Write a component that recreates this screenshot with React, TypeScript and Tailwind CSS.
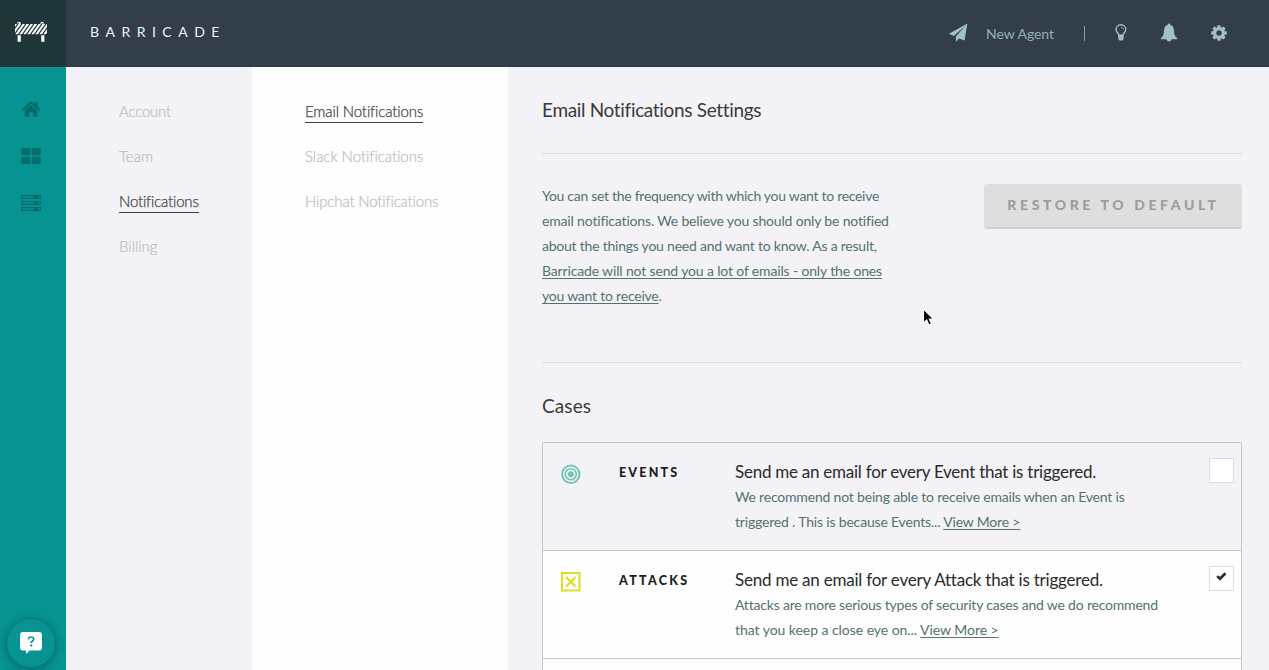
import type { ReactNode } from "react";

const STRIPES = [0, 4, 8, 12, 16, 20, 24, 28, 32, 36, 40];

function BarricadeLogo() {
  return (
    <svg width="34" height="22" viewBox="0 0 34 22" className="block">
      <defs>
        <clipPath id="board">
          <path d="M1 3h2.5V1.6L5 .7l1.5.9V3h20V1.6L28 .7l1.5.9V3H33v10.2H1z" />
        </clipPath>
      </defs>
      <g clipPath="url(#board)" stroke="#fff" strokeWidth="2.100">
        {STRIPES.map((x) => (
          <path key={x} d={`M${x - 6} 14 L${x + 4} 0`} />
        ))}
      </g>
      <path d="M3 2.2 5 .8l2 1.4zM26.5 2.2l2-1.4 2 1.4z" fill="#fff" />
      <path d="M3.6 14.3h3.2v6.4H3.6zM27.2 14.3h3.2v6.4h-3.2z" fill="#fff" />
    </svg>
  );
}

function PlaneIcon() {
  return (
    <svg width="20" height="20" viewBox="0 0 20 20" fill="#a3bfcc" className="block">
      <path d="M18.400.400 0 10.700l4.700 2.300L16.200 3.100 6.900 13.500v5.200l3.200-3.300 5.400 2z" />
    </svg>
  );
}

function BulbIcon() {
  return (
    <svg width="12" height="18" viewBox="0 0 12 18" className="block">
      <path
        d="M3.9 11.3C3.6 9 1 8.2 1 5.4a4.9 4.6 0 0 1 9.8 0c0 2.800-2.600 3.600-2.900 5.900z"
        fill="none"
        stroke="#a3bfcc"
        strokeWidth="1.4"
      />
      <path d="M3.200 11h5.400v3.200c0 1.600-1 2.400-2.700 2.400s-2.700-.8-2.700-2.400z" fill="#a3bfcc" />
      <path d="M6 3.300c1.300 0 2.100.8 2.200 2" fill="none" stroke="#a3bfcc" strokeWidth=".9" />
    </svg>
  );
}

function BellIcon() {
  return (
    <svg width="18" height="20" viewBox="0 0 18 20" fill="#a3bfcc" className="block">
      <path d="M9 .5c.9 0 1.400.6 1.400 1.500C13 2.800 13.900 5 14 7.600c.1 4 .7 6 3.200 7.700v.9H.8v-.9C3.300 13.600 3.900 11.600 4 7.600 4.100 5 5 2.800 7.600 2 7.600 1.100 8.100.5 9 .5z" />
      <path d="M6.300 16h5.400c-.3 1.600-1.200 2.500-2.700 2.500S6.600 17.600 6.300 16z" />
    </svg>
  );
}

function GearIcon() {
  return (
    <svg width="16" height="16" viewBox="-8 -8 16 16" className="block">
      <circle r="4.300" fill="none" stroke="#a3bfcc" strokeWidth="3.200" />
      {[0, 45, 90, 135, 180, 225, 270, 315].map((a) => (
        <path key={a} d="M-1.900-5.200-1.500-7.800h3l.4 2.600z" fill="#a3bfcc" transform={`rotate(${a})`} />
      ))}
    </svg>
  );
}

function HomeIcon() {
  return (
    <svg width="20" height="17" viewBox="0 0 20 17" className="block">
      <path d="M13.700 1.200h2.800v5.500l-2.800-2.600z" fill="#046c6b" />
      <path d="M1.100 9.200 10 1.600l8.900 7.600" fill="none" stroke="#046c6b" strokeWidth="1.900" />
      <path d="M10 3.900l6.300 5.400v6.500h-4.500v-4.500H8.300v4.500H3.700V9.300z" fill="#046c6b" />
    </svg>
  );
}

function GridIcon() {
  return (
    <svg width="20" height="16" viewBox="0 0 20 16" fill="#046c6b" className="block">
      <rect x="0.300" width="9" height="7.200" rx="1.300" />
      <rect x="10.700" width="9" height="7.200" rx="1.300" />
      <rect x="0.300" y="8.700" width="9" height="7.200" rx="1.300" />
      <rect x="10.700" y="8.700" width="9" height="7.200" rx="1.300" />
    </svg>
  );
}

function ServerIcon() {
  return (
    <svg width="20" height="16" viewBox="0 0 20 16" className="block">
      {[0, 6, 12].map((y) => (
        <g key={y}>
          <rect x=".6" y={y + 0.6} width="18.800" height="2.800" fill="none" stroke="#046c6b" strokeWidth="1.300" />
          <path d={`M13 ${y}h4v4h-4z`} fill="#046c6b" />
        </g>
      ))}
    </svg>
  );
}

function ChatIcon() {
  return (
    <svg width="22" height="22" viewBox="0 0 22 22" className="block">
      <path
        d="M3 0h16a3 3 0 0 1 3 3v12.500a3 3 0 0 1-3 3H9.500L6.500 22l-.7-3.500H3a3 3 0 0 1-3-3V3a3 3 0 0 1 3-3z"
        fill="#fff"
      />
      <path
        d="M8.400 7.200c.1-1.500 1.100-2.200 2.600-2.200 1.600 0 2.700.8 2.700 2.100 0 1.900-2.500 1.900-2.500 4"
        fill="none"
        stroke="#069392"
        strokeWidth="1.700"
      />
      <rect x="10.200" y="12.500" width="2" height="2" fill="#069392" />
    </svg>
  );
}

function EventIcon() {
  return (
    <svg width="20" height="20" viewBox="-10 -10 20 20" fill="none" stroke="#74c5b7" className="block">
      <circle cx="-.2" cy=".3" r="8.700" strokeWidth="2" />
      <circle cx="-.2" cy=".3" r="5.500" strokeWidth="1.600" />
      <circle cx="-.2" cy=".3" r="3" fill="#74c5b7" stroke="none" />
    </svg>
  );
}

function AttackIcon() {
  return (
    <svg width="20" height="20" viewBox="0 0 20 20" fill="none" stroke="#dcdf25" className="block">
      <rect x="1" y="1" width="17.500" height="17.500" strokeWidth="2" />
      <path d="M5 5l9.500 9.500M14.500 5 5 14.500" strokeWidth="2.200" />
    </svg>
  );
}

function NavItem({ active, className, children }: { active?: boolean; className: string; children: ReactNode }) {
  return (
    <div className="flex h-[45px] items-start whitespace-nowrap pt-[12px] text-[15px] leading-[20px]">
      <span
        className={
          (active
            ? "h-[22px] border-b border-[#3f3f3f] font-light text-[#444] [-webkit-text-stroke:0.25px_#444] "
            : "h-[22px] font-light text-[#bababc] [-webkit-text-stroke:0.2px_#c0c0c2] ") + className
        }
      >
        {children}
      </span>
    </div>
  );
}

function CaseRow({
  icon,
  label,
  title,
  line1,
  line2,
  checked,
  className,
}: {
  icon: ReactNode;
  label: ReactNode;
  title: ReactNode;
  line1: ReactNode;
  line2: ReactNode;
  checked: boolean;
  className: string;
}) {
  return (
    <div className={"flex h-[108px] items-start border-b border-[#c8c8ca] " + className}>
      <div className="w-[76px] shrink-0 pl-[18px] pt-[21px]">{icon}</div>
      <div className="w-[116px] shrink-0 pt-[20px] text-[12.500px] font-black leading-[20px] text-[#1c1c1c]">
        {label}
      </div>
      <div className="min-w-0 flex-1 whitespace-nowrap text-[14px] leading-[25px] text-[#557170]">
        <div className="mt-[16px] text-[17px] leading-[25px] text-[#2a2a2a]">{title}</div>
        <div>{line1}</div>
        <div>{line2}</div>
      </div>
      <div className="mr-[7px] mt-[15px] flex h-[25px] w-[25px] shrink-0 justify-center border border-[#dcdcde] bg-white pt-[5px]">
        {checked && (
          <svg width="11" height="9" viewBox="0 0 11 9" className="block">
            <path d="M1.200 4.100l2.800 2.700 5.500-5.500" fill="none" stroke="#2e2e2e" strokeWidth="2.700" />
          </svg>
        )}
      </div>
    </div>
  );
}

const link = "underline decoration-1 underline-offset-[2px]";

export default function App() {
  return (
    <div className="relative flex h-[670px] w-[1269px] flex-col overflow-hidden bg-[#f3f2f7] font-['Lato',sans-serif]">
      <header className="flex h-[67px] shrink-0 bg-[#323f4b]">
        <div className="flex h-[67px] w-[66px] shrink-0 bg-[#213639] pl-[14px] pt-[21px]">
          <BarricadeLogo />
        </div>
        <div className="flex flex-1 items-center border-b border-[#2b3742] pl-[24px] pr-[42px]">
          <div className="mt-[-4px] text-[14px] tracking-[6.500px] text-[#f0f3f5]">BARRICADE</div>
          <div className="ml-auto flex items-center">
            <PlaneIcon />
            <div className="ml-[17px] mt-[1px] text-[14px] tracking-[-0.050px] text-[#94adba]">New Agent</div>
            <div className="ml-[30px] h-[15px] w-px bg-[#82a0a9]" />
            <div className="ml-[30px]">
              <BulbIcon />
            </div>
            <div className="ml-[33px]">
              <BellIcon />
            </div>
            <div className="ml-[33px]">
              <GearIcon />
            </div>
          </div>
        </div>
      </header>

      <div className="flex min-h-0 flex-1">
        <aside className="flex w-[66px] shrink-0 flex-col items-start bg-[#069392] pl-[21px] pt-[34px]">
          <HomeIcon />
          <div className="mt-[30px]">
            <GridIcon />
          </div>
          <div className="mt-[31px]">
            <ServerIcon />
          </div>
        </aside>

        <nav className="w-[186px] shrink-0 pl-[53px] pt-[22px]">
          <NavItem className="tracking-[-0.200px]">Account</NavItem>
          <NavItem className="tracking-[0px]">Team</NavItem>
          <NavItem active className="tracking-[-0.180px]">Notifications</NavItem>
          <NavItem className="tracking-[0px]">Billing</NavItem>
        </nav>

        <nav className="w-[256px] shrink-0 bg-[#fdfdfd] pl-[53px] pt-[22px]">
          <NavItem active className="tracking-[-0.120px]">Email Notifications</NavItem>
          <NavItem className="tracking-[-0.020px]">Slack Notifications</NavItem>
          <NavItem className="tracking-[-0.150px]">Hipchat Notifications</NavItem>
        </nav>

        <main className="w-[761px] shrink-0 pl-[34px] pr-[27px]">
          <h1 className="h-[87px] border-b border-[#dcdce0] pt-[30px] text-[19px] leading-[25px] tracking-[-0.330px] text-[#3a3a3a]">
            Email Notifications Settings
          </h1>
          <section className="flex h-[209px] items-start justify-between border-b border-[#dcdce0] pt-[30px]">
            <p className="mt-[-1px] whitespace-nowrap text-[14px] leading-[25px] text-[#557170]">
              <span className="block tracking-[-0.290px]">You can set the frequency with which you want to receive</span>
              <span className="block tracking-[-0.170px]">email notifications. We believe you should only be notified</span>
              <span className="block tracking-[-0.230px]">about the things you need and want to know. As a result,</span>
              <span className="block tracking-[-0.150px]">
                <span className={link}>Barricade will not send you a lot of emails - only the ones</span>
              </span>
              <span className="block tracking-[-0.220px]">
                <span className={link}>you want to receive</span>.
              </span>
            </p>
            <button className="h-[45px] w-[258px] rounded-[3px] border-b-2 border-[#cfcfcf] bg-[#dedede] pb-[2px] pl-[1px] text-[14px] font-black tracking-[3.600px] text-[#9c9c9c]">
              RESTORE TO DEFAULT
            </button>
          </section>
          <h2 className="h-[79px] pt-[30px] text-[19px] leading-[25px] tracking-[0.100px] text-[#3a3a3a]">Cases</h2>
          <div className="border border-[#c8c8ca]">
            <CaseRow
              className=""
              icon={<EventIcon />}
              label={<span className="tracking-[2.200px]">EVENTS</span>}
              title={<span className="tracking-[-0.250px]">Send me an email for every Event that is triggered.</span>}
              line1={
                <span className="tracking-[-0.190px]">We recommend not being able to receive emails when an Event is</span>
              }
              line2={
                <span className="tracking-[-0.180px]">
                  triggered . This is because Events... <span className={link}>View More &gt;</span>
                </span>
              }
              checked={false}
            />
            <CaseRow
              className="bg-[#fdfdfd]"
              icon={<AttackIcon />}
              label={<span className="tracking-[2.300px]">ATTACKS</span>}
              title={<span className="tracking-[-0.220px]">Send me an email for every Attack that is triggered.</span>}
              line1={
                <span className="tracking-[-0.200px]">
                  Attacks are more serious types of security cases and we do recommend
                </span>
              }
              line2={
                <span className="tracking-[-0.050px]">
                  that you keep a close eye on... <span className={link}>View More &gt;</span>
                </span>
              }
              checked
            />
            <div className="h-[108px] bg-[#fdfdfd]" />
          </div>
        </main>
      </div>

      <button className="absolute left-[6px] top-[618px] flex h-[50px] w-[50px] justify-center rounded-full border border-[#057a7a] bg-[#069392] pt-[13px] shadow-[0_2px_8px_rgba(0,50,50,0.4)]">
        <ChatIcon />
      </button>

      <svg width="14" height="20" viewBox="0 0 14 20" className="pointer-events-none absolute left-[922px] top-[307px]">
        <path
          d="M1.500 2v14l3.200-3 2.200 5 2.600-1.100-2.200-4.800h4.300z"
          fill="#000"
          stroke="#fff"
          strokeWidth="1.100"
        />
      </svg>
    </div>
  );
}
